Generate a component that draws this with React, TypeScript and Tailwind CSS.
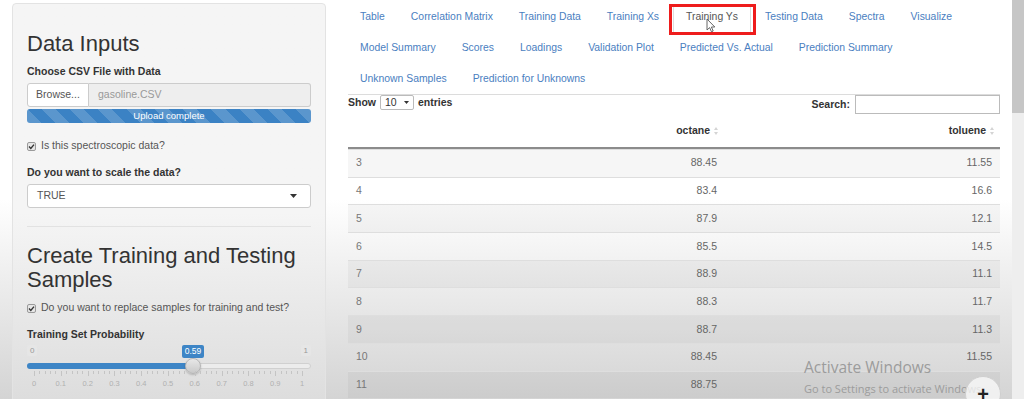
import React from "react";

const tabs = [
  "Table",
  "Correlation Matrix",
  "Training Data",
  "Training Xs",
  "Training Ys",
  "Testing Data",
  "Spectra",
  "Visualize",
  "Model Summary",
  "Scores",
  "Loadings",
  "Validation Plot",
  "Predicted Vs. Actual",
  "Prediction Summary",
  "Unknown Samples",
  "Prediction for Unknowns",
];

// last toluene cell sits under the windows watermark
const rows = [
  ["3", "88.45", "11.55"],
  ["4", "83.4", "16.6"],
  ["5", "87.9", "12.1"],
  ["6", "85.5", "14.5"],
  ["7", "88.9", "11.1"],
  ["8", "88.3", "11.7"],
  ["9", "88.7", "11.3"],
  ["10", "88.45", "11.55"],
  ["11", "88.75", ""],
];

function CheckBox() {
  return (
    <svg width="9" height="9" viewBox="0 0 9 9" className="shrink-0">
      <rect x="0.5" y="0.5" width="8" height="8" rx="1.5" fill="#e6e6e6" stroke="#9a9a9a" />
      <path d="M2 4.6 L3.8 6.4 L7 2.6" fill="none" stroke="#333" strokeWidth="1.4" />
    </svg>
  );
}

function SortIcon() {
  return (
    <svg width="4" height="10" viewBox="0 0 4 10" className="shrink-0">
      <path d="M0 4 L2 1 L4 4 Z" fill="#d4d4d4" />
      <path d="M0 6 L2 9 L4 6 Z" fill="#d4d4d4" />
    </svg>
  );
}

function Slider() {
  const ticks = Array.from({ length: 51 }, (_, i) => i);
  const labels = ["0", "0.1", "0.2", "0.3", "0.4", "0.5", "0.6", "0.7", "0.8", "0.9", "1"];
  return (
    <div className="relative h-[52px] w-full">
      <span className="absolute left-0 top-[3px] h-[11px] rounded-[2px] bg-[#e6e6e6] px-[3px] text-[8px] leading-[11px] text-[#999]">
        0
      </span>
      <span className="absolute right-0 top-[3px] h-[11px] rounded-[2px] bg-[#e6e6e6] px-[3px] text-[8px] leading-[11px] text-[#999]">
        1
      </span>
      <span className="absolute left-[155px] top-[3px] flex h-[13px] w-[22px] items-center justify-center rounded-[2px] bg-[#3d85c6] text-[8.5px] text-white">
        0.59
      </span>
      <div className="absolute left-0 right-0 top-[21px] h-[6px] rounded-full border border-[#d0d0d0] bg-[#ececec]" />
      <div className="absolute left-0 top-[21px] h-[6px] w-[166px] rounded-l-full bg-[#3d85c6]" />
      <div className="absolute left-[158px] top-[16px] h-[16px] w-[16px] rounded-full border border-[#b5b5b5] bg-linear-to-b from-[#e8e8e8] to-[#c9c9c9] shadow-[0_1px_2px_rgba(0,0,0,0.2)]" />
      {ticks.map((i) => (
        <div
          key={i}
          className="absolute top-[29px] w-px bg-[#c4c4c4]"
          style={{ left: 7 + i * 5.36, height: i % 5 === 0 ? 5 : 3 }}
        />
      ))}
      {labels.map((l, i) => (
        <span
          key={l}
          className="absolute top-[36px] w-[20px] -translate-x-1/2 text-center text-[7.5px] text-[#b0b0b0]"
          style={{ left: 7 + i * 26.8 }}
        >
          {l}
        </span>
      ))}
    </div>
  );
}

function Sidebar() {
  return (
    <aside className="ml-[12px] mt-[3px] h-[420px] w-[314px] shrink-0 rounded-[4px] border border-[#e3e3e3] bg-linear-to-b from-[#f5f5f5] from-50% to-[#dadada] px-[14px] pt-[28px] text-[10.5px] text-[#333]">
      <h2 className="text-[22px] leading-[24px]">Data Inputs</h2>
      <p className="mt-[7px] font-bold leading-[16px]">Choose CSV File with Data</p>
      <div className="mt-[4px] flex h-[24px]">
        <div className="flex w-[62px] items-center justify-center rounded-l-[3px] border border-[#ccc] bg-white text-[#555]">
          Browse...
        </div>
        <div className="flex flex-1 items-center rounded-r-[3px] border border-l-0 border-[#ccc] bg-[#eee] px-[9px] text-[#999]">
          gasoline.CSV
        </div>
      </div>
      <div className="mt-[2px] flex h-[14px] items-center justify-center rounded-[3px] bg-[#3b82c4] bg-[repeating-linear-gradient(45deg,rgba(255,255,255,0.16)_0_10px,transparent_10px_20px)] text-[9.5px] text-white">
        Upload complete
      </div>
      <label className="mt-[15px] flex h-[16px] items-center gap-[5px] text-[#555]">
        <CheckBox />
        Is this spectroscopic data?
      </label>
      <p className="mt-[10px] font-bold leading-[16px]">Do you want to scale the data?</p>
      <div className="mt-[4px] flex h-[24px] items-center justify-between rounded-[3px] border border-[#ccc] bg-white pl-[9px] pr-[13px] text-[#555]">
        TRUE
        <svg width="7" height="4" viewBox="0 0 7 4">
          <path d="M0 0 H7 L3.5 4 Z" fill="#333" />
        </svg>
      </div>
      <hr className="mt-[18px] border-[#e2e2e2]" />
      <h2 className="mt-[17px] text-[22px] leading-[24px]">Create Training and Testing Samples</h2>
      <label className="mt-[8px] flex h-[16px] items-center gap-[5px] text-[#555]">
        <CheckBox />
        Do you want to replace samples for training and test?
      </label>
      <p className="mt-[10px] font-bold leading-[16px]">Training Set Probability</p>
      <Slider />
    </aside>
  );
}

function Tabs() {
  return (
    <ul className="flex flex-wrap border-b border-[#dcdcdc] pt-[1px] text-[10.4px]">
      {tabs.map((t) =>
        t === "Training Ys" ? (
          <li key={t} className="relative mr-[2px] flex h-[31px] items-center px-[13px] text-[#555]">
            <div className="absolute inset-x-0 bottom-[-1px] top-[4px] rounded-t-[3px] border border-b-0 border-[#ddd] bg-white" />
            <span className="relative">{t}</span>
            <div className="absolute -left-[4px] -right-[5px] -bottom-[3px] top-[3px] border-[3px] border-[#ee1c1c]" />
            <svg width="10" height="15" viewBox="0 0 10 15" className="absolute left-[33px] top-[17px]">
              <path d="M1 1 L1 12 L3.6 9.6 L5.5 13.8 L7.2 13 L5.4 9 L8.8 9 Z" fill="#fff" stroke="#555" strokeWidth="0.9" />
            </svg>
          </li>
        ) : (
          <li key={t} className="mr-[2px] flex h-[31px] items-center px-[12px] text-[#4a80bf]">
            {t}
          </li>
        )
      )}
    </ul>
  );
}

function DataTable() {
  return (
    <div className="text-[10.5px]">
      <div className="flex items-start justify-between">
        <div className="flex h-[15px] items-center gap-[4px] font-bold text-[#333]">
          Show
          <span className="flex h-[15px] w-[34px] items-center justify-between rounded-[2px] border border-[#bbb] bg-white px-[4px] font-normal">
            10
            <svg width="5" height="3" viewBox="0 0 5 3">
              <path d="M0 0 H5 L2.5 3 Z" fill="#333" />
            </svg>
          </span>
          entries
        </div>
        <div className="flex h-[19px] items-center gap-[5px] font-bold text-[#333]">
          Search:
          <div className="h-[19px] w-[145px] border border-[#bbb] bg-white" />
        </div>
      </div>
      <div className="grid h-[35px] grid-cols-[200px_177px_275px] items-end border-b-2 border-[#8c8c8c] pb-[8px] font-bold text-[#333]">
        <span />
        <span className="flex items-center justify-end gap-[4px] pr-[7px]">
          octane
          <SortIcon />
        </span>
        <span className="flex items-center justify-end gap-[4px] pr-[6px]">
          toluene
          <SortIcon />
        </span>
      </div>
      {rows.map((r, i) => (
        <div
          key={r[0]}
          className={`grid h-[27.7px] grid-cols-[200px_177px_275px] items-center border-t border-[#dedede] first:border-t-0 ${
            i % 2 === 0 ? "bg-black/[0.035]" : ""
          }`}
        >
          <span className="pl-[8px] text-[#777]">{r[0]}</span>
          <span className="pr-[8px] text-right text-[#666]">{r[1]}</span>
          <span className="pr-[8px] text-right text-[#666]">{r[2]}</span>
        </div>
      ))}
    </div>
  );
}

export default function App() {
  return (
    <div className="relative flex h-[399px] w-[1024px] overflow-hidden bg-linear-to-b from-white from-50% to-[#d4d4d4] font-['Liberation_Sans',Arial,sans-serif]">
      <Sidebar />
      <main className="ml-[22px] w-[652px] shrink-0">
        <Tabs />
        <DataTable />
      </main>
      <div className="ml-[12px] flex w-[12px] shrink-0 flex-col bg-[#eeeeee]">
        <div className="h-[113px] bg-[#c6c6c6]" />
      </div>

      <div className="pointer-events-none absolute left-[804px] top-[357px] font-['Open_Sans','Noto_Sans',sans-serif] text-[#9c9c9c]">
        <p className="text-[15.5px] leading-[20px]">Activate Windows</p>
        <p className="mt-[5px] text-[11px] leading-[14px]">Go to Settings to activate Windows.</p>
      </div>
      <div className="absolute left-[965px] top-[376px] flex h-[36px] w-[36px] items-center justify-center rounded-full border border-[#cfcfcf] bg-white/70 text-[20px] font-bold text-[#222]">
        +
      </div>
    </div>
  );
}
